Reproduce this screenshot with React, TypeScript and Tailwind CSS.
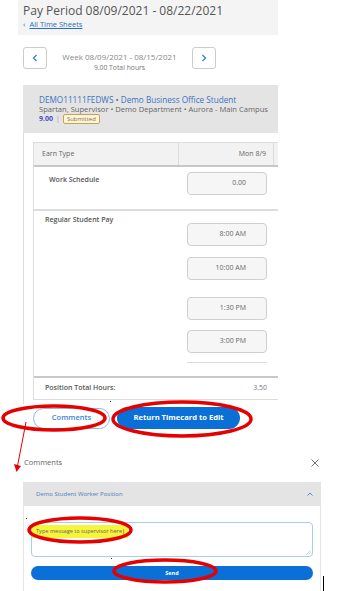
import React from 'react';

const times = ['8:00 AM', '10:00 AM', '1:30 PM', '3:00 PM'];

const TimeBox: React.FC<{ value: string; className?: string }> = ({ value, className = '' }) => (
  <div
    className={`w-[80px] h-[23px] rounded-[4px] border border-[#cfcfcf] bg-[#f6f6f6] flex items-center justify-end pr-[20px] text-[7px] text-[#666] ${className}`}
  >
    {value}
  </div>
);

export default function App() {
  return (
    <div className="relative w-[337px] h-[591px] overflow-hidden bg-white font-['Open_Sans',sans-serif]">
      {/* Pay period header */}
      <div className="ml-[18px] w-[260px] h-[35px] bg-[#f4f4f4] pl-[5px] pt-[3px]">
        <div className="text-[12px] leading-[16px] text-[#555] whitespace-nowrap">Pay Period 08/09/2021 - 08/22/2021</div>
        <div className="flex items-center gap-[4px] text-[7.5px] leading-[10px] text-[#2a6ebb]">
          <span className="text-[8px]">&lsaquo;</span>
          <span className="underline">All Time Sheets</span>
        </div>
      </div>

      {/* Week nav */}
      <div className="ml-[23px] mt-[12px] h-[22px] flex">
        <button className="w-[24px] h-[22px] rounded-[3px] border border-[#ccc] bg-white flex items-center justify-center text-[#2a7bd4]">
          <svg width="6" height="8" viewBox="0 0 6 8" fill="none" stroke="currentColor" strokeWidth="1.2">
            <path d="M4.5 1 L1.5 4 L4.5 7" />
          </svg>
        </button>
        <div className="w-[145px] pt-[4px] text-center text-[#888]">
          <div className="text-[8px] leading-[12px] whitespace-nowrap">Week 08/09/2021 - 08/15/2021</div>
          <div className="text-[6.8px] leading-[10px] text-[#777]">9.00 Total hours</div>
        </div>
        <button className="w-[24px] h-[22px] rounded-[3px] border border-[#ccc] bg-white flex items-center justify-center text-[#2a7bd4]">
          <svg width="6" height="8" viewBox="0 0 6 8" fill="none" stroke="currentColor" strokeWidth="1.2">
            <path d="M1.5 1 L4.5 4 L1.5 7" />
          </svg>
        </button>
      </div>

      {/* Position card */}
      <div className="ml-[23px] mt-[16px] w-[255px]">
        <div className="h-[48px] bg-[#e4e4e4] pl-[16px] pt-[10px]">
          <div className="text-[8.2px] leading-[10px] text-[#3a73c2] whitespace-nowrap">DEMO11111FEDWS • Demo Business Office Student</div>
          <div className="text-[7.6px] leading-[8px] text-[#666] whitespace-nowrap">Spartan, Supervisor • Demo Department • Aurora - Main Campus</div>
          <div className="mt-[1px] flex items-center gap-[3px] text-[7px] leading-[10px]">
            <span className="font-bold text-[#4b4bc8]">9.00</span>
            <span className="text-[#999]">|</span>
            <span className="h-[10px] rounded-[2px] border border-[#c9a44c] bg-[#fdf6dd] px-[3px] text-[6px] leading-[8px] text-[#8a6d3b]">Submitted</span>
          </div>
        </div>

        <div className="border-l border-[#ddd] pl-[9px] pt-[9px] pb-[4px]">
          <div className="w-[245px] border-l border-[#ddd] text-[7px]">
            {/* header row */}
            <div className="h-[25px] flex bg-[#f2f2f2] border-t border-[#ddd] border-b-2 border-b-[#c8c8c8] text-[#666]">
              <div className="w-[145px] border-r border-[#ddd] pl-[8px] flex items-center">Earn Type</div>
              <div className="w-[95px] border-r border-[#ddd] pr-[7px] flex items-center justify-end">Mon 8/9</div>
            </div>

            {/* Work schedule */}
            <div className="h-[44px] flex border-b-2 border-[#dcdcdc]">
              <div className="w-[145px] pl-[15px] pt-[9px] leading-[8px] font-semibold text-[#555]">Work Schedule</div>
              <div className="w-[95px] pl-[8px] pt-[5px]">
                <TimeBox value="0.00" />
              </div>
            </div>

            {/* Regular student pay */}
            <div className="flex border-b-2 border-[#c8c8c8]">
              <div className="w-[145px] pl-[11px] pt-[5px] leading-[8px] font-semibold text-[#555]">Regular Student Pay</div>
              <div className="w-[95px] pl-[8px] pt-[12px] pb-[13px]">
                <TimeBox value={times[0]} />
                <TimeBox value={times[1]} className="mt-[11px]" />
                <TimeBox value={times[2]} className="mt-[17px]" />
                <TimeBox value={times[3]} className="mt-[10px]" />
                <div className="mt-[9px] w-[80px] h-[1px] bg-[#ddd]" />
              </div>
            </div>

            {/* Totals */}
            <div className="h-[22px] flex items-center border-b border-[#ddd]">
              <div className="w-[145px] pl-[11px] font-semibold text-[#555]">Position Total Hours:</div>
              <div className="w-[95px] pr-[7px] text-right text-[#777]">3.50</div>
            </div>
          </div>
        </div>
      </div>

      {/* Actions */}
      <div className="mt-[3px] ml-[33px] flex items-center gap-[7px]">
        <button className="w-[77px] h-[21px] rounded-full border border-[#8ab8e8] bg-white text-[7.5px] font-semibold text-[#3b82d6]">
          Comments
        </button>
        <button className="w-[123px] h-[22px] rounded-full bg-[#0a6fd6] text-[7.6px] font-bold text-white">
          Return Timecard to Edit
        </button>
      </div>

      {/* Comments dialog */}
      <div className="mt-[29px] flex items-center justify-between pl-[24px] pr-[18px] h-[10px]">
        <span className="text-[7.5px] text-[#666]">Comments</span>
        <svg width="8" height="8" viewBox="0 0 8 8" stroke="#777" strokeWidth="1">
          <path d="M0.5 0.5 L7.5 7.5 M7.5 0.5 L0.5 7.5" />
        </svg>
      </div>

      <div className="ml-[23px] mt-[14px] w-[298px]">
        <div className="h-[24px] bg-[#e4e4e4] pl-[13px] pr-[8px] flex items-center justify-between">
          <span className="text-[6px] text-[#4a7fc1]">Demo Student Worker Position</span>
          <svg width="6" height="4" viewBox="0 0 6 4" fill="none" stroke="#5a8ac8" strokeWidth="1">
            <path d="M0.5 3.5 L3 1 L5.5 3.5" />
          </svg>
        </div>
        <div className="h-[100px] border-x border-[#e6e6e6] pl-[7px] pt-[16px]">
          <div className="relative w-[282px] h-[35px] rounded-[4px] border border-[#a9cdf0] bg-white pt-[2px] leading-[12px]">
            <span className="inline-block h-[13px] bg-[#f5f53a] pl-[4px] pr-[3px] text-[5.6px] leading-[13px] text-[#666] align-top">
              Type message to supervisor here<span className="text-[#222]">|</span>
            </span>
            <svg className="absolute right-[1px] bottom-[1px]" width="5" height="5" viewBox="0 0 5 5" stroke="#aaa" strokeWidth="0.6">
              <path d="M4.5 0.5 L0.5 4.5 M4.5 2.5 L2.5 4.5" />
            </svg>
          </div>
          <button className="mt-[9px] w-[282px] h-[14px] rounded-full bg-[#0a6fd6] text-[5.5px] font-bold text-white leading-[14px]">
            Send
          </button>
        </div>
      </div>

      {/* Annotations drawn over the screenshot */}
      <svg className="pointer-events-none absolute left-0 top-0" width="337" height="591" viewBox="0 0 337 591" fill="none">
        <ellipse cx="54" cy="418" rx="51" ry="12" stroke="#e60000" strokeWidth="3.5" />
        <ellipse cx="182" cy="419" rx="69" ry="17" stroke="#e60000" strokeWidth="3.5" />
        <ellipse cx="80" cy="530" rx="51" ry="12" stroke="#e60000" strokeWidth="3.5" />
        <ellipse cx="165" cy="571" rx="51" ry="11" stroke="#e60000" strokeWidth="3.5" />
        <line x1="26" y1="422" x2="17.5" y2="466" stroke="#e60000" strokeWidth="1" />
        <path d="M14 464 L21 466 L16.5 472 Z" fill="#e60000" />
        <line x1="323.5" y1="576" x2="323.5" y2="591" stroke="#000" strokeWidth="1" />
        <rect x="110" y="401" width="1" height="1" fill="#333" />
        <rect x="26" y="518" width="1" height="1" fill="#333" />
        <rect x="111" y="558" width="1" height="1" fill="#333" />
      </svg>
    </div>
  );
}
